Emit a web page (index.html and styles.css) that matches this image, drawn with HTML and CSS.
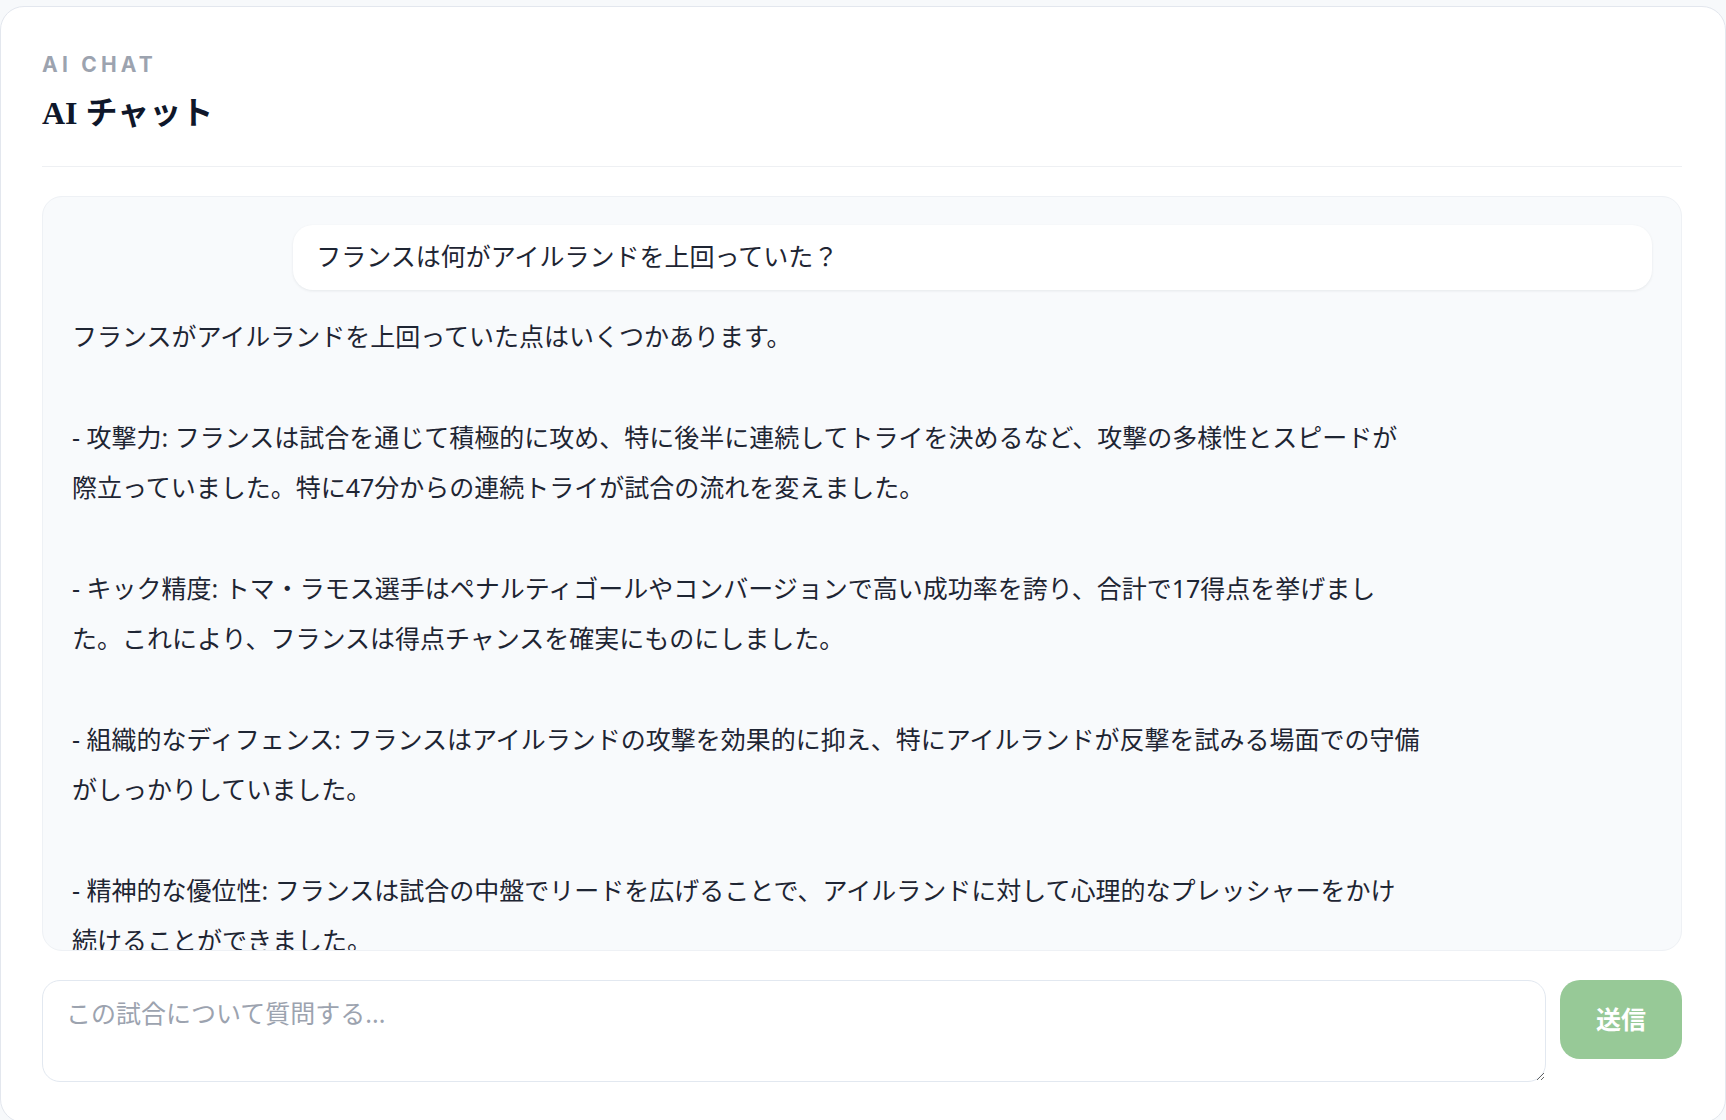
FILE: index.html
```html
<!DOCTYPE html>
<html lang="ja">
<head>
    <meta charset="UTF-8">
    <meta name="viewport" content="width=device-width, initial-scale=1.0">
    <title>AI チャット</title>
    <link rel="stylesheet" href="styles.css">
</head>
<body>

    <div class="card">
        <!-- ヘッダー -->
        <header class="chat-header">
            <p class="eyebrow">AI CHAT</p>
            <h1 class="title">AI チャット</h1>
        </header>

        <!-- メッセージ -->
        <div class="messages">
            <div class="msg user">フランスは何がアイルランドを上回っていた？</div>
            <div class="msg bot">
                <p>フランスがアイルランドを上回っていた点はいくつかあります。</p>
                <p>- 攻撃力: フランスは試合を通じて積極的に攻め、特に後半に連続してトライを決めるなど、攻撃の多様性とスピードが<br>際立っていました。特に47分からの連続トライが試合の流れを変えました。</p>
                <p>- キック精度: トマ・ラモス選手はペナルティゴールやコンバージョンで高い成功率を誇り、合計で17得点を挙げまし<br>た。これにより、フランスは得点チャンスを確実にものにしました。</p>
                <p>- 組織的なディフェンス: フランスはアイルランドの攻撃を効果的に抑え、特にアイルランドが反撃を試みる場面での守備<br>がしっかりしていました。</p>
                <p>- 精神的な優位性: フランスは試合の中盤でリードを広げることで、アイルランドに対して心理的なプレッシャーをかけ<br>続けることができました。</p>
            </div>
        </div>

        <!-- 入力欄 -->
        <form class="composer" onsubmit="return false">
            <textarea rows="2" placeholder="この試合について質問する..."></textarea>
            <button type="submit">送信</button>
        </form>
    </div>

</body>
</html>
```

FILE: styles.css
```css
body {
    margin: 0;
    padding-top: 6px;
    height: 100vh;
    box-sizing: border-box;
    overflow: hidden;
    background: #f7f9fb;
    font-family: "Noto Sans", "Noto Sans CJK JP", sans-serif;
    color: #1e2533;
}
.card {
    background: #fff;
    border: 1px solid #e3e7ee;
    border-radius: 24px;
    padding: 42px 43px 40px 41px;
}
.chat-header {
    padding-bottom: 33px;
    border-bottom: 1px solid #eef0f3;
}
.eyebrow {
    margin: 0;
    font-family: Inter, "Liberation Sans", sans-serif;
    font-size: 21px;
    line-height: 31px;
    font-weight: 700;
    letter-spacing: 0.2em;
    color: #9ca3af;
}
.title {
    margin: 13px 0 0;
    font-family: "Liberation Serif", "Noto Sans CJK JP", serif;
    font-size: 32px;
    line-height: 40px;
    font-weight: 700;
    color: #0f172a;
}
.messages {
    margin-top: 29px;
    height: 755px;
    box-sizing: border-box;
    padding: 28px 29px;
    background: #f8fafc;
    border: 1px solid #eef1f5;
    border-radius: 20px;
    overflow: hidden;
}
.msg {
    font-size: 25px;
    line-height: 50.3px;
}
.msg.user {
    margin-left: auto;
    width: 86%;
    box-sizing: border-box;
    padding: 6px 23px 9px;
    background: #fff;
    border-radius: 20px;
    box-shadow: 0 1px 3px rgba(15, 23, 42, 0.08);
}
.msg.bot {
    margin-top: 21px;
    max-width: 90%;
}
.msg.bot p {
    margin: 0 0 50.3px;
}
.msg.bot p:last-child {
    margin-bottom: 0;
}
.composer {
    display: flex;
    align-items: flex-start;
    gap: 14px;
    margin-top: 29px;
}
.composer textarea {
    flex: 1;
    font-family: inherit;
    font-size: 25px;
    line-height: 36px;
    padding: 14px 23px;
    border: 1px solid #e2e8f0;
    border-radius: 18px;
    color: #1e2533;
    background: #fff;
    outline: none;
}
.composer textarea::placeholder {
    color: #9ca3af;
}
.composer button {
    padding: 21px 36px;
    line-height: 37px;
    font-family: inherit;
    font-size: 25px;
    font-weight: 700;
    color: #fff;
    background: #97c997;
    border: none;
    border-radius: 20px;
    cursor: pointer;
}
```
